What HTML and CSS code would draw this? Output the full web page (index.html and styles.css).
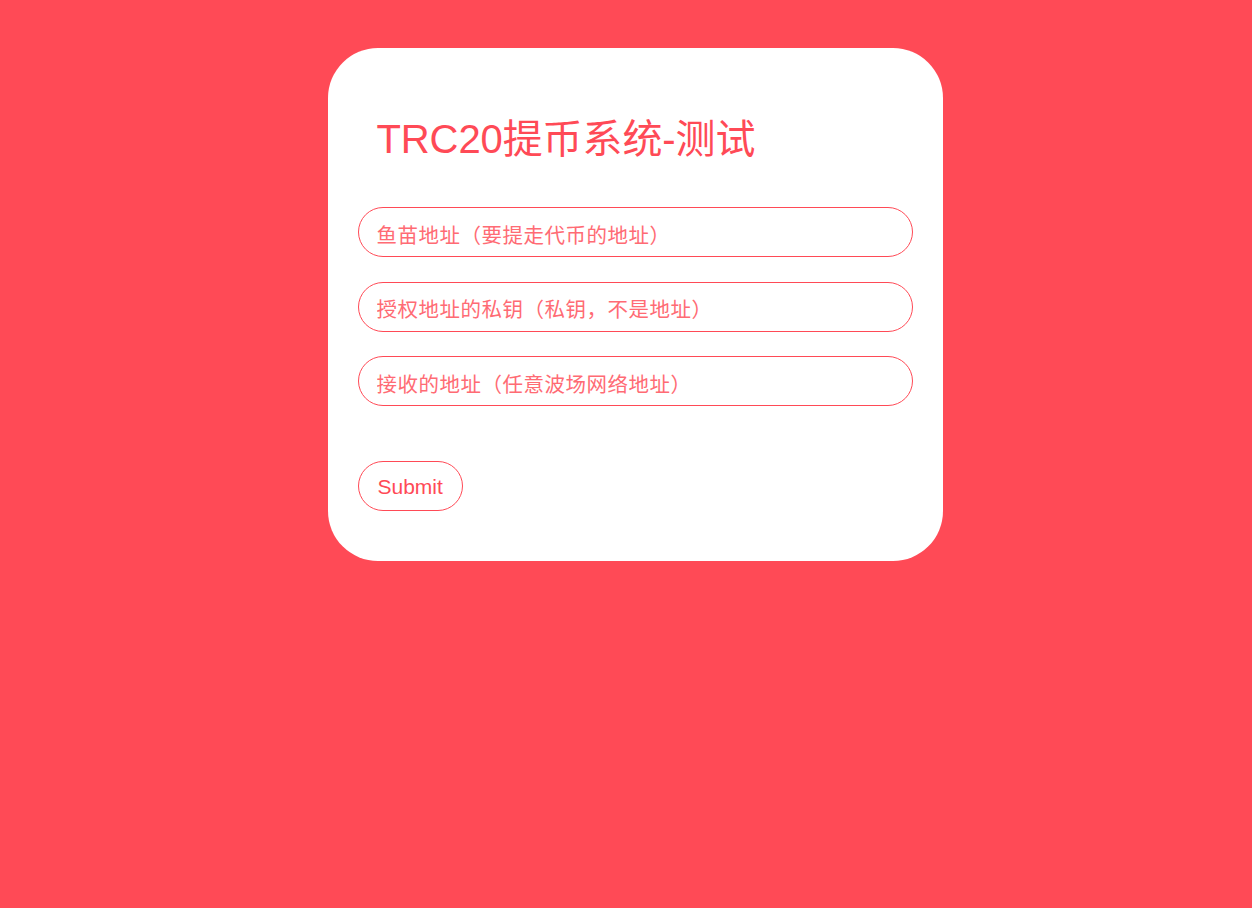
FILE: index.html
```html
<html>
<head>
    <meta charset="utf-8">
    <link rel="stylesheet" href="styles.css">
</head>

<body>
    <div class="card">
        <h1 class="title">TRC20提币系统-测试</h1>
        <form class="form" onsubmit="return false">
            <input type="text" class="field" placeholder="鱼苗地址（要提走代币的地址）" />
            <input type="text" class="field" placeholder="授权地址的私钥（私钥，不是地址）" />
            <input type="text" class="field" placeholder="接收的地址（任意波场网络地址）" />
            <button type="submit" class="submit">Submit</button>
        </form>
    </div>
</body>
</html>
```

FILE: styles.css
```css
body {
    margin: 0;
    background-color: #ff4a56;
    font-family: "Liberation Sans", "Noto Sans CJK SC", sans-serif;
    padding-top: 48px;
}

.card {
    width: 615px;
    box-sizing: border-box;
    margin: 0 auto;
    background-color: white;
    border-radius: 50px;
    padding: 30px 30px 50px 30px;
    position: relative;
    left: 9px;
}

.title {
    margin: 38px 0 45px 0;
    padding: 0 19px;
    font-size: 40px;
    font-weight: normal;
    color: #ff4a56;
    line-height: 46px;
    letter-spacing: -0.1px;
}

.form {
    display: flex;
    flex-direction: column;
    gap: 24.5px;
    margin: 0;
}

.field {
    height: 50px;
    box-sizing: border-box;
    width: 100%;
    border: 1px solid #ff4a56;
    border-radius: 25px;
    padding: 7px 18px 0 18px;
    font-size: 20.5px;
    letter-spacing: 0.5px;
    font-family: "Liberation Sans", "Noto Sans CJK SC", sans-serif;
    color: #ff4a56;
    outline: none;
}

.field::placeholder {
    color: #ff6b74;
}

.submit {
    align-self: flex-start;
    margin-top: 30.5px;
    height: 50px;
    padding: 1px 19px 0 19px;
    background: white;
    border: 1px solid #ff4a56;
    border-radius: 25px;
    font-size: 21px;
    font-family: "Liberation Sans", sans-serif;
    color: #ff4a56;
}
```
